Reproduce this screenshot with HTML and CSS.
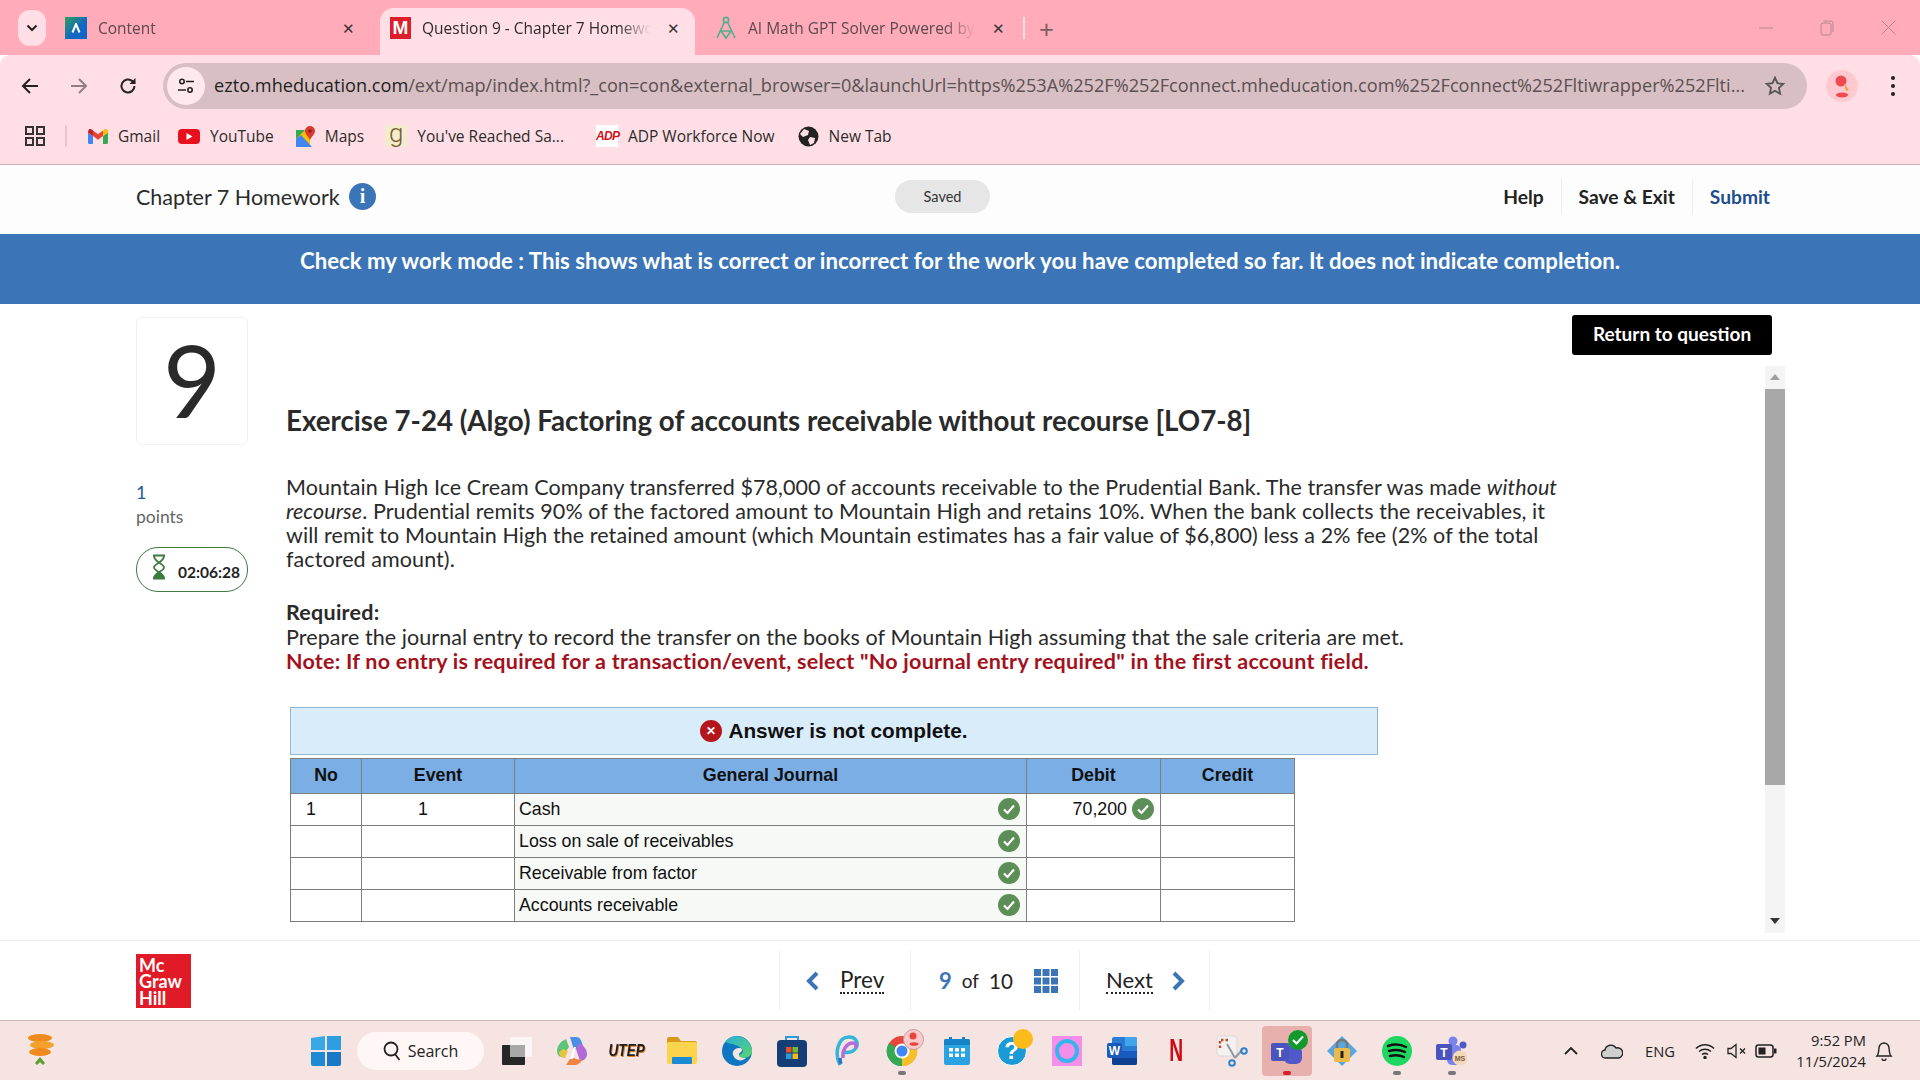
FILE: index.html
```html
<!DOCTYPE html>
<html lang="en">
<head>
    <meta charset="UTF-8">
    <title>Question 9 - Chapter 7 Homework</title>
    <link rel="stylesheet" href="styles.css">
</head>
<body>
    <svg class="defs" width="0" height="0">
        <symbol id="ok" viewBox="0 0 22 22">
            <circle cx="11" cy="11" r="11" fill="#5b8f57"/>
            <path d="M6 11.5l3.5 3.500L16 7.500" fill="none" stroke="#fff" stroke-width="2.200"/>
        </symbol>
    </svg>

    <!-- Browser tabs -->
    <div class="tabstrip">
        <div class="tab-menu">
            <svg width="12" height="8" viewBox="0 0 12 8"><path d="M1.500 1.500L6 6l4.500-4.500" fill="none" stroke="#222" stroke-width="2"/></svg>
        </div>
        <div class="tab">
            <span class="fav fav-content">
                <svg width="10" height="10" viewBox="0 0 10 10"><path d="M1.500 9.500L5 1l3.500 8.500" fill="none" stroke="#fff" stroke-width="2"/></svg>
            </span>
            <span class="tab-title">Content</span>
            <span class="tab-x">✕</span>
        </div>
        <div class="tab active">
            <span class="fav fav-m">M</span>
            <span class="tab-title">Question 9 - Chapter 7 Homework</span>
            <span class="tab-x">✕</span>
        </div>
        <div class="tab">
            <svg class="fav" width="22" height="24" viewBox="0 0 22 24" fill="none" stroke="#4fb08f" stroke-width="1.600">
                <circle cx="11" cy="4" r="2.600"/>
                <path d="M9.500 6L2 22M12.500 6L20 22M5 15h12M6 15l5 7 5-7"/>
            </svg>
            <span class="tab-title">AI Math GPT Solver Powered by ChatGPT</span>
            <span class="tab-x">✕</span>
        </div>
        <span class="tab-sep"></span>
        <span class="tab-plus">+</span>
        <div class="win-controls">
            <svg width="14" height="14" viewBox="0 0 14 14"><path d="M0 7h14" stroke="#b08a92" stroke-width="1"/></svg>
            <svg width="14" height="16" viewBox="0 0 14 16" fill="none" stroke="#b08a92" stroke-width="1"><rect x="1" y="3" width="10" height="12" rx="2"/><path d="M3.500 1H11a2 2 0 0 1 2 2v9"/></svg>
            <svg width="15" height="15" viewBox="0 0 15 15"><path d="M0.500 0.500l14 14M14.500 0.500l-14 14" stroke="#b08a92" stroke-width="1"/></svg>
        </div>
    </div>

    <!-- Address bar -->
    <div class="toolbar">
        <svg class="nav-ic" width="20" height="20" viewBox="0 0 20 20" fill="none" stroke="#222" stroke-width="2"><path d="M18 10H3M10 3l-7 7 7 7"/></svg>
        <svg class="nav-ic" width="20" height="20" viewBox="0 0 20 20" fill="none" stroke="#8d7f82" stroke-width="2"><path d="M2 10h15M10 3l7 7-7 7"/></svg>
        <svg class="nav-ic" width="20" height="20" viewBox="0 0 20 20" fill="none" stroke="#222" stroke-width="2"><path d="M16.500 10a6.500 6.500 0 1 1-2-4.700L17 7.500"/><path d="M17.500 2v6h-6" fill="#222" stroke="none"/></svg>
        <div class="omnibox">
            <span class="site-btn">
                <svg width="18" height="18" viewBox="0 0 18 18" fill="none" stroke="#222" stroke-width="1.600"><circle cx="5" cy="4.500" r="2.200"/><path d="M9 4.500h8M1 13h8"/><circle cx="13" cy="13" r="2.200"/></svg>
            </span>
            <span class="url"><span class="url-host">ezto.mheducation.com</span>/ext/map/index.html?_con=con&amp;external_browser=0&amp;launchUrl=https%253A%252F%252Fconnect.mheducation.com%252Fconnect%252Fltiwrapper%252Flti...</span>
            <svg width="22" height="22" viewBox="0 0 24 24" fill="none" stroke="#555" stroke-width="2"><path d="M12 3l2.700 6 6.300.700-4.700 4.300 1.300 6.500L12 17.200 6.400 20.500l1.300-6.500L3 9.700 9.300 9z"/></svg>
        </div>
        <span class="avatar">
            <svg width="20" height="26" viewBox="0 0 20 26"><circle cx="9" cy="8" r="5.500" fill="#f04a50"/><path d="M12 10l5 7-3 1z" fill="#f2a33c"/><ellipse cx="10" cy="22" rx="6" ry="2.500" fill="#f04a50"/></svg>
        </span>
        <svg class="menu-dots" width="6" height="22" viewBox="0 0 6 22" fill="#222"><circle cx="3" cy="3" r="2"/><circle cx="3" cy="11" r="2"/><circle cx="3" cy="19" r="2"/></svg>
    </div>

    <!-- Bookmarks -->
    <div class="bookmarks">
        <svg class="apps" width="20" height="20" viewBox="0 0 20 20" fill="none" stroke="#333" stroke-width="2"><rect x="1" y="1" width="7" height="7"/><rect x="12" y="1" width="7" height="7"/><rect x="1" y="12" width="7" height="7"/><rect x="12" y="12" width="7" height="7"/></svg>
        <span class="bm-sep"></span>
        <span class="bm bm-gmail">
            <svg width="20" height="15" viewBox="0 0 20 15">
                <path d="M0 3.500v10A1.500 1.500 0 0 0 1.500 15H5V7z" fill="#4285f4"/>
                <path d="M20 3.500v10a1.500 1.500 0 0 1-1.500 1.500H15V7z" fill="#34a853"/>
                <path d="M5 7V1.500l5 3.800 5-3.800V7l-5 3.800z" fill="#ea4335"/>
                <path d="M0 3.500L5 7V1.500L3 0C1.500-.8 0 .8 0 3.500z" fill="#c5221f"/>
                <path d="M15 1.500V7l5-3.500c0-2.700-1.500-4.300-3-3.500z" fill="#fbbc04"/>
            </svg>
            Gmail
        </span>
        <span class="bm bm-yt">
            <svg width="22" height="15" viewBox="0 0 22 15"><rect width="22" height="15" rx="4" fill="#e8101c"/><path d="M8.500 4v7l6-3.500z" fill="#fff"/></svg>
            YouTube
        </span>
        <span class="bm bm-maps">
            <svg width="19" height="21" viewBox="0 0 19 21">
                <path d="M0 4h14v17H0z" fill="#fbbc04"/>
                <path d="M0 4h9L0 13z" fill="#34a853"/>
                <path d="M0 21V13l5-4 11 12z" fill="#4285f4"/>
                <path d="M14 0a5 5 0 0 1 5 5c0 3-3 5-5 9-2-4-5-6-5-9a5 5 0 0 1 5-5z" fill="#d93a30"/>
                <circle cx="14" cy="5" r="1.800" fill="#8f1f1a"/>
            </svg>
            Maps
        </span>
        <span class="bm bm-g"><span class="g-fav">g</span>You've Reached Sa...</span>
        <span class="bm bm-adp"><span class="adp-fav">ADP</span>ADP Workforce Now</span>
        <span class="bm bm-new">
            <svg width="21" height="21" viewBox="0 0 21 21"><circle cx="10.500" cy="10.500" r="10" fill="#222"/><path d="M6 3l5 2-1 4-5 2-3-3zM12 11l5 1-1 5-4 2-2-5z" fill="#ffdfe5"/></svg>
            New Tab
        </span>
    </div>

    <!-- Assignment header -->
    <div class="app-header">
        <div class="assign-title">Chapter 7 Homework</div>
        <span class="info-ic">i</span>
        <span class="saved">Saved</span>
        <div class="header-links">
            <a href="#">Help</a>
            <a href="#">Save &amp; Exit</a>
            <a href="#" class="submit">Submit</a>
        </div>
    </div>

    <div class="banner">Check my work mode : This shows what is correct or incorrect for the work you have completed so far. It does not indicate completion.</div>

    <!-- Question -->
    <div class="content">
        <div class="side">
            <div class="q-number">9</div>
            <div class="points-num">1</div>
            <div class="points-label">points</div>
            <div class="timer">
                <svg class="hourglass" width="18" height="26" viewBox="0 0 18 26" fill="none" stroke="#3d7a40" stroke-width="1.800"><path d="M3 1.500h12M3 24.500h12M4 2c0 6 10 8 10 11.500S4 19 4 24M14 2c0 6-10 8-10 11.500S14 19 14 24"/><path d="M4 24c0-3 3-5 5-6 2 1 5 3 5 6z" fill="#3d7a40" stroke="none"/></svg>
                <span>02:06:28</span>
            </div>
        </div>

        <div class="main">
            <div class="return-row"><button class="return-btn">Return to question</button></div>
            <div class="scroll-wrap">
                <div class="question">
                    <h1>Exercise 7-24 (Algo) Factoring of accounts receivable without recourse [LO7-8]</h1>
                    <p class="q-text">Mountain High Ice Cream Company transferred $78,000 of accounts receivable to the Prudential Bank. The transfer was made <em>without recourse</em>. Prudential remits 90% of the factored amount to Mountain High and retains 10%. When the bank collects the receivables, it will remit to Mountain High the retained amount (which Mountain estimates has a fair value of $6,800) less a 2% fee (2% of the total factored amount).</p>
                    <p class="q-req"><strong>Required:</strong><br>Prepare the journal entry to record the transfer on the books of Mountain High assuming that the sale criteria are met.<br><strong class="note">Note: If no entry is required for a transaction/event, select "No journal entry required" in the first account field.</strong></p>

                    <div class="alert">
                        <span class="alert-x">✕</span>
                        Answer is not complete.
                    </div>
                    <table class="journal">
                        <thead>
                            <tr><th class="c-no">No</th><th class="c-ev">Event</th><th class="c-gj">General Journal</th><th class="c-dr">Debit</th><th class="c-cr">Credit</th></tr>
                        </thead>
                        <tbody>
                            <tr>
                                <td class="no">1</td><td class="ev">1</td>
                                <td class="acct"><div class="acct-in">Cash<svg class="ok"><use href="#ok"/></svg></div></td>
                                <td class="dr"><div class="dr-in">70,200<svg class="ok"><use href="#ok"/></svg></div></td><td></td>
                            </tr>
                            <tr>
                                <td></td><td></td>
                                <td class="acct"><div class="acct-in">Loss on sale of receivables<svg class="ok"><use href="#ok"/></svg></div></td>
                                <td></td><td></td>
                            </tr>
                            <tr>
                                <td></td><td></td>
                                <td class="acct"><div class="acct-in">Receivable from factor<svg class="ok"><use href="#ok"/></svg></div></td>
                                <td></td><td></td>
                            </tr>
                            <tr>
                                <td></td><td></td>
                                <td class="acct"><div class="acct-in">Accounts receivable<svg class="ok"><use href="#ok"/></svg></div></td>
                                <td></td><td></td>
                            </tr>
                        </tbody>
                    </table>
                </div>
                <div class="scrollbar">
                    <span class="sb-up"></span>
                    <span class="sb-thumb"></span>
                    <span class="sb-down"></span>
                </div>
            </div>
        </div>
    </div>

    <!-- Footer nav -->
    <div class="app-footer">
        <div class="mh-logo">Mc<br>Graw<br>Hill</div>
        <div class="pager">
            <div class="pg pg-prev">
                <svg width="14" height="20" viewBox="0 0 14 20"><path d="M11 2L3 10l8 8" fill="none" stroke="#3b75b7" stroke-width="4"/></svg>
                <a href="#">Prev</a>
            </div>
            <div class="pg pg-count">
                <b>9</b><span class="of">of</span><span>10</span>
                <svg class="grid-ic" width="24" height="24" viewBox="0 0 24 24" fill="#3b75b7"><rect width="7" height="7"/><rect x="8.500" width="7" height="7"/><rect x="17" width="7" height="7"/><rect y="8.500" width="7" height="7"/><rect x="8.500" y="8.500" width="7" height="7"/><rect x="17" y="8.500" width="7" height="7"/><rect y="17" width="7" height="7"/><rect x="8.500" y="17" width="7" height="7"/><rect x="17" y="17" width="7" height="7"/></svg>
            </div>
            <div class="pg pg-next">
                <a href="#">Next</a>
                <svg width="14" height="20" viewBox="0 0 14 20"><path d="M3 2l8 8-8 8" fill="none" stroke="#3b75b7" stroke-width="4"/></svg>
            </div>
        </div>
    </div>

    <!-- Windows taskbar -->
    <div class="taskbar">
        <svg class="tray-left" width="30" height="36" viewBox="0 0 30 36">
            <ellipse cx="15" cy="5" rx="12" ry="4" fill="#ef8a1d"/><ellipse cx="17" cy="12" rx="12" ry="4" fill="#f2a12d"/><ellipse cx="15" cy="19" rx="11" ry="4" fill="#ef8a1d"/>
            <path d="M10 30l5-6 5 6-2 2-3-3-3 3z" fill="#5a9e2f"/>
        </svg>
        <div class="task-icons">
            <span class="ti">
                <svg width="30" height="30" viewBox="0 0 30 30"><path d="M0 2l14-2v14H0z" fill="#38a9e6"/><path d="M16 0l14 0v14H16z" fill="#2f9ee0"/><path d="M0 16h14v14H2a2 2 0 0 1-2-2z" fill="#1f8ad4"/><path d="M16 16h14v12a2 2 0 0 1-2 2H16z" fill="#1878c4"/></svg>
            </span>
            <div class="search-pill">
                <svg width="18" height="20" viewBox="0 0 18 20" fill="none" stroke="#222" stroke-width="1.800"><circle cx="8" cy="8" r="6.500"/><path d="M12 13l4.500 6"/></svg>
                Search
            </div>
            <span class="ti">
                <svg width="30" height="28" viewBox="0 0 30 28"><rect x="8" y="0" width="22" height="20" rx="1" fill="#f9f6f5"/><rect x="0" y="8" width="23" height="20" rx="1" fill="#262626"/><rect x="8" y="8" width="15" height="12" fill="#a8a8a8"/></svg>
            </span>
            <span class="ti">
                <svg width="30" height="30" viewBox="0 0 30 30">
                    <path d="M13 1h6c4 0 5 3 6 6l3 9c-3-3-7-4-11-2z" fill="#4a8fe7"/>
                    <path d="M22 7c4 2 8 6 8 11 0 4-3 7-7 7l-4-12z" fill="#b06bd8"/>
                    <path d="M9 3c-5 2-9 7-9 12 0 3 2 6 5 6l7-10z" fill="#5cc47a"/>
                    <path d="M2 16c0 4 3 6 6 6l3-7-5-2z" fill="#e3c540"/>
                    <path d="M9 29h8c4 0 7-2 8-6-4 1-8 0-10-3z" fill="#ef8245"/>
                    <path d="M13 23l4-12h2l-3 12z" fill="#fff"/>
                </svg>
            </span>
            <span class="ti ti-utep"><span>UTEP</span></span>
            <span class="ti">
                <svg width="30" height="27" viewBox="0 0 30 27"><path d="M0 2a2 2 0 0 1 2-2h9l3 4h14a2 2 0 0 1 2 2v4H0z" fill="#d99a1c"/><rect y="5" width="30" height="22" rx="2" fill="#fcd34d"/><rect x="5" y="20" width="20" height="7" rx="1" fill="#1c8ad4"/></svg>
            </span>
            <span class="ti">
                <svg width="30" height="30" viewBox="0 0 30 30">
                    <defs><linearGradient id="edge" x1="0" y1="0" x2="1" y2="1"><stop offset="0" stop-color="#2ab0d8"/><stop offset="1" stop-color="#5ad66a"/></linearGradient></defs>
                    <circle cx="15" cy="15" r="15" fill="#0f76c2"/>
                    <path d="M3 6C9-2 25-3 30 13c1 6-4 9-9 9-3 0-5-1-5-3 4 0 6-3 4-6-3-4-11-5-17-7z" fill="url(#edge)"/>
                    <path d="M11 19c-1-4 2-7 6-7 3 0 4 2 2 4-2 1-3 3-1 5 2 1 4 1 6 1-4 4-11 3-13-3z" fill="#f6e4e2"/>
                </svg>
            </span>
            <span class="ti">
                <svg width="30" height="32" viewBox="0 0 30 32"><path d="M9 7V2h12v5" fill="none" stroke="#2b9bdc" stroke-width="2"/><rect y="5" width="30" height="27" rx="4" fill="#153e77"/><rect x="9" y="12" width="5.500" height="5.500" fill="#e8502a"/><rect x="15.500" y="12" width="5.500" height="5.500" fill="#7ab92b"/><rect x="9" y="18.500" width="5.500" height="5.500" fill="#2b9bdc"/><rect x="15.500" y="18.500" width="5.500" height="5.500" fill="#f6b51c"/></svg>
            </span>
            <span class="ti">
                <svg width="26" height="32" viewBox="0 0 26 32" fill="none" stroke-width="3.500"><path d="M6 30C0 18 4 2 15 2c7 0 10 6 7 11-3 4-8 5-12 4" stroke="#35b6d8"/><path d="M9 23c-1-7 3-15 10-15 3 0 4 3 2 5" stroke="#b56bd8"/><path d="M7 29c-1-2-1-4-1-6" stroke="#2c72c9"/></svg>
            </span>
            <span class="ti">
                <svg width="32" height="32" viewBox="0 0 32 32"><circle cx="16" cy="16" r="15" fill="#e8453c"/><path d="M16 16L29 8A15 15 0 0 1 16 31z" fill="#f5c02a"/><path d="M16 16l-13-8a15 15 0 0 0 13 23z" fill="#34a853"/><circle cx="16" cy="16" r="7.500" fill="#fff"/><circle cx="16" cy="16" r="5.500" fill="#4285f4"/></svg>
                <span class="chrome-badge">
                    <svg width="14" height="16" viewBox="0 0 14 16"><circle cx="6" cy="5" r="3.500" fill="#e8453c"/><ellipse cx="7" cy="13" rx="4.500" ry="1.800" fill="#e8453c"/></svg>
                </span>
                <span class="run-dot"></span>
            </span>
            <span class="ti">
                <svg width="26" height="28" viewBox="0 0 26 28"><rect y="2" width="26" height="26" rx="2" fill="#2ba3e0"/><path d="M0 4a2 2 0 0 1 2-2h22a2 2 0 0 1 2 2v4H0z" fill="#1583c6"/><rect width="3" height="5" x="5" fill="#1583c6"/><rect width="3" height="5" x="18" fill="#1583c6"/><g fill="#fff"><rect x="5" y="11" width="4" height="3.500"/><rect x="11" y="11" width="4" height="3.500"/><rect x="17" y="11" width="4" height="3.500"/><rect x="5" y="16.500" width="4" height="3.500"/><rect x="11" y="16.500" width="4" height="3.500"/><rect x="17" y="16.500" width="4" height="3.500"/></g></svg>
            </span>
            <span class="ti ti-help">
                <span class="help-q">?</span>
                <span class="help-dot"></span>
            </span>
            <span class="ti">
                <svg width="30" height="30" viewBox="0 0 30 30"><rect width="30" height="30" fill="#f58ee8"/><circle cx="15" cy="15" r="10" fill="none" stroke="#35b5ec" stroke-width="4"/></svg>
            </span>
            <span class="ti">
                <svg width="30" height="28" viewBox="0 0 30 28"><rect x="5" width="25" height="28" rx="2" fill="#2b7cd3"/><path d="M18 0h10a2 2 0 0 1 2 2v7H18z" fill="#41a5ee"/><rect x="5" y="14" width="25" height="7" fill="#185abd"/><path d="M5 21h25v5a2 2 0 0 1-2 2H7a2 2 0 0 1-2-2z" fill="#103f91"/><rect x="0" y="6" width="15" height="15" rx="2" fill="#185abd"/><text x="7.500" y="18" text-anchor="middle" class="word-w">W</text></svg>
            </span>
            <span class="ti ti-netflix"><span>N</span></span>
            <span class="ti">
                <svg width="32" height="32" viewBox="0 0 32 32" fill="none"><rect x="1" y="1" width="20" height="20" rx="3" fill="#f5f1f1" stroke="#dfd8d8"/><path d="M4 13V5h8" stroke="#c0492b" stroke-width="2.500" stroke-dasharray="2.500 2"/><path d="M11 9l8 14M26 15l-7 8" stroke="#8f9aa5" stroke-width="2"/><circle cx="16" cy="28" r="2.800" stroke="#2b82c9" stroke-width="2"/><circle cx="28" cy="16" r="2.800" stroke="#2b82c9" stroke-width="2"/></svg>
            </span>
            <span class="ti ti-active">
                <svg width="32" height="30" viewBox="0 0 32 30"><circle cx="22" cy="11" r="6" fill="#7b83eb"/><rect x="13" y="10" width="18" height="18" rx="6" fill="#5059c9"/><rect x="0" y="7" width="18" height="18" rx="2" fill="#4b53bc"/><text x="9" y="21" text-anchor="middle" class="teams-t">T</text></svg>
                <span class="teams-check">
                    <svg width="12" height="10" viewBox="0 0 12 10"><path d="M1 5l3.500 3.500L11 1.500" fill="none" stroke="#fff" stroke-width="2"/></svg>
                </span>
                <span class="run-dot red"></span>
            </span>
            <span class="ti">
                <svg width="30" height="30" viewBox="0 0 30 30"><path d="M15 0l15 15-15 15L0 15z" fill="#5aa7dd"/><rect x="7" y="12" width="16" height="14" rx="2" fill="#e9b949"/><path d="M10 12V9a5 5 0 0 1 10 0v3" fill="none" stroke="#777" stroke-width="2.500"/><rect x="13.500" y="15" width="3" height="7" fill="#222"/></svg>
            </span>
            <span class="ti">
                <svg width="30" height="30" viewBox="0 0 30 30" fill="none"><circle cx="15" cy="15" r="15" fill="#1ed760"/><path d="M6 10c6-2 12-2 18 1M7 15c5-1.500 11-1.500 16 1M8 20c4-1 10-1 14 1" stroke="#111" stroke-width="2.500" stroke-linecap="round"/></svg>
                <span class="run-dot"></span>
            </span>
            <span class="ti">
                <svg width="32" height="30" viewBox="0 0 32 30"><circle cx="17" cy="5" r="4.500" fill="#7b83eb"/><circle cx="27" cy="9" r="3.500" fill="#5059c9"/><rect x="11" y="9" width="14" height="20" rx="5" fill="#7b83eb"/><rect x="0" y="8" width="16" height="16" rx="2" fill="#4b53bc"/><text x="8" y="20.500" text-anchor="middle" class="teams-t">T</text><circle cx="24" cy="22" r="7.500" fill="#f3d9b8"/><text x="24" y="24.500" text-anchor="middle" class="teams-ms">MS</text></svg>
                <span class="run-dot"></span>
            </span>
        </div>
        <div class="tray">
            <svg class="tray-caret" width="14" height="9" viewBox="0 0 14 9"><path d="M1 8l6-6 6 6" fill="none" stroke="#222" stroke-width="1.800"/></svg>
            <svg class="tray-cloud" width="22" height="16" viewBox="0 0 22 16"><path d="M5 15a4 4 0 0 1-1-8 6 6 0 0 1 11-2 5 5 0 0 1 3 10z" fill="#cfcfcf" stroke="#222" stroke-width="1.400"/></svg>
            <span class="tray-lang">ENG</span>
            <svg class="tray-wifi" width="20" height="16" viewBox="0 0 20 16" fill="none" stroke="#222" stroke-width="1.500"><path d="M1 5.500c5-5 13-5 18 0M4 8.500c3.500-3 8.500-3 12 0M7 11.500c2-1.500 4-1.500 6 0"/><circle cx="10" cy="14.500" r="1" fill="#222"/></svg>
            <svg class="tray-vol" width="20" height="16" viewBox="0 0 20 16" fill="none" stroke="#222" stroke-width="1.300"><path d="M1 5.500h3L9 1.500v13l-5-4H1z"/><path d="M13 5.500l5 5M18 5.500l-5 5"/></svg>
            <svg class="tray-bat" width="22" height="14" viewBox="0 0 22 14"><rect x="1" y="1" width="17" height="12" rx="2.500" fill="none" stroke="#222" stroke-width="1.500"/><rect x="3.500" y="3.500" width="7" height="7" fill="#222"/><rect x="19" y="4.500" width="2.500" height="5" fill="#222"/></svg>
            <div class="clock"><div>9:52 PM</div><div>11/5/2024</div></div>
            <svg class="tray-bell" width="18" height="20" viewBox="0 0 18 20" fill="none" stroke="#222" stroke-width="1.400"><path d="M2 15c2-2 1.500-5 2-8a5 5 0 0 1 10 0c.500 3 0 6 2 8zM7 17.500a2 2 0 0 0 4 0"/></svg>
        </div>
    </div>
</body>
</html>
```

FILE: styles.css
```css
/* General Reset */
* {
    margin: 0;
    padding: 0;
    box-sizing: border-box;
}

body {
    width: 1920px;
    height: 1080px;
    overflow: hidden;
    display: flex;
    flex-direction: column;
    background: #fff;
    color: #222;
    font-family: "Lato", "Liberation Sans", sans-serif;
}

a {
    color: inherit;
    text-decoration: none;
}

.defs {
    position: absolute;
}

/* Browser tabs */
.tabstrip {
    height: 55px;
    flex: none;
    display: flex;
    align-items: flex-end;
    background: #ffabb9;
    font-family: "Open Sans", "Noto Sans", sans-serif;
    font-size: 15.500px;
    color: #5b4a4e;
    padding-left: 18px;
}

.tab-menu {
    width: 28px;
    height: 36px;
    margin-bottom: 9px;
    margin-right: 9px;
    border-radius: 12px;
    background: #ffdfe5;
    display: flex;
    align-items: center;
    justify-content: center;
}

.tab {
    width: 315px;
    height: 47px;
    padding: 0 15px 8px 10px;
    display: flex;
    align-items: center;
    gap: 11px;
}

.tab + .tab {
    margin-left: 10px;
}

.tab.active {
    background: #ffdfe5;
    border-radius: 14px 14px 0 0;
    color: #2c2c2c;
}

.tab-title {
    flex: 1;
    white-space: nowrap;
    overflow: hidden;
    -webkit-mask-image: linear-gradient(to right, #000 86%, transparent);
    mask-image: linear-gradient(to right, #000 86%, transparent);
}

.tab:first-of-type .tab-title {
    -webkit-mask-image: none;
    mask-image: none;
}

.tab-x {
    font-size: 15px;
    margin-left: 5px;
    color: #333;
}

.fav {
    flex: none;
}

.fav-content {
    width: 22px;
    height: 22px;
    background: linear-gradient(135deg, #2c9f5c 0%, #1266c4 60%, #1266c4 100%);
    display: flex;
    align-items: center;
    justify-content: center;
}

.fav-m {
    width: 21px;
    height: 22px;
    background: #dc1f2b;
    color: #fff;
    font: bold 19px/22px "Liberation Sans", sans-serif;
    text-align: center;
}

.tab-sep {
    width: 2px;
    height: 22px;
    background: #ffdfe5;
    margin: 0 0 16px 3px;
}

.tab-plus {
    font-size: 26px;
    line-height: 30px;
    margin: 0 0 11px 14px;
    color: #7d5a62;
}

.win-controls {
    margin-left: auto;
    height: 55px;
    display: flex;
    align-items: center;
    gap: 47px;
    padding-right: 24px;
}

/* Address bar */
.toolbar {
    height: 55px;
    flex: none;
    display: flex;
    align-items: center;
    background: #ffdfe5;
    padding: 7px 0 0 20px;
    border-radius: 10px 10px 0 0;
    font-family: "Open Sans", "Noto Sans", sans-serif;
}

.nav-ic {
    margin-right: 29px;
}

.omnibox {
    width: 1644px;
    height: 46px;
    margin-left: -4px;
    background: #d8bfc3;
    border-radius: 23px;
    display: flex;
    align-items: center;
    padding: 0 21px 0 4px;
}

.site-btn {
    width: 38px;
    height: 38px;
    border-radius: 50%;
    background: #ffe9ec;
    display: flex;
    align-items: center;
    justify-content: center;
    margin-right: 9px;
}

.url {
    flex: 1;
    font-size: 18.150px;
    line-height: 24px;
    padding-bottom: 2px;
    color: #5b5052;
    white-space: nowrap;
    overflow: hidden;
}

.url-host {
    color: #1f1f1f;
}

.avatar {
    width: 32px;
    height: 32px;
    margin-left: 19px;
    border-radius: 50%;
    background: #ffc9cf;
    display: flex;
    align-items: center;
    justify-content: center;
}

.menu-dots {
    margin-left: 32px;
}

/* Bookmarks */
.bookmarks {
    height: 55px;
    flex: none;
    display: flex;
    align-items: center;
    background: #ffdfe5;
    border-bottom: 1px solid #c9b3b7;
    padding: 0 0 2px 25px;
    font-family: "Open Sans", "Noto Sans", sans-serif;
    font-size: 15.500px;
    color: #2c2c2c;
}

.bm-sep {
    width: 2px;
    height: 22px;
    background: #f0c2ca;
    margin: 0 21px 0 20px;
}

.bm {
    display: flex;
    align-items: center;
    gap: 10px;
    white-space: nowrap;
}

.bm-yt {
    margin-left: 18px;
}

.bm-maps {
    margin-left: 22px;
}

.bm-g {
    margin-left: 21px;
}

.g-fav {
    width: 22px;
    height: 22px;
    background: #f4eccf;
    color: #7a5a2a;
    font: 300 26px/17px "Roboto", sans-serif;
    text-align: center;
}

.bm-adp {
    margin-left: 32px;
}

.adp-fav {
    width: 22px;
    height: 22px;
    background: #fff;
    color: #d0121b;
    font: italic bold 12px/22px "Liberation Sans", sans-serif;
    letter-spacing: -.6px;
    text-align: center;
}

.bm-new {
    margin-left: 23px;
}

/* Assignment header */
.app-header {
    height: 69px;
    flex: none;
    display: flex;
    align-items: center;
    padding: 0 133px 6px 136px;
    background: #fdfdfd;
}

.assign-title {
    font-size: 21.500px;
    color: #2b2b2b;
    width: 213px;
    white-space: nowrap;
}

.info-ic {
    width: 27px;
    height: 27px;
    border-radius: 50%;
    background: #3b75b7;
    color: #fff;
    font: bold 20px/27px "Liberation Serif", serif;
    text-align: center;
}

.saved {
    width: 95px;
    height: 33px;
    margin-left: 519px;
    border-radius: 17px;
    background: #e6e6e6;
    color: #333;
    font-size: 14.500px;
    line-height: 33px;
    text-align: center;
}

.header-links {
    margin-left: auto;
    display: flex;
    font-size: 19.200px;
    font-weight: 700;
    color: #222;
}

.header-links a {
    padding: 6px 17px;
    border-left: 1px solid #eee;
}

.header-links a:first-child {
    border-left: none;
}

.header-links .submit {
    color: #1f4e8c;
}

.banner {
    height: 70px;
    flex: none;
    background: #3b75b7;
    color: #fff;
    font-size: 22.200px;
    font-weight: 700;
    text-align: center;
    padding-top: 13px;
}

/* Question */
.content {
    height: 636px;
    flex: none;
    display: flex;
    padding-left: 136px;
    overflow: hidden;
}

.side {
    width: 112px;
    flex: none;
    padding-top: 13px;
}

.q-number {
    height: 128px;
    border: 1px solid #f0f0f0;
    border-radius: 6px;
    text-align: center;
    font-size: 100px;
    line-height: 122px;
    color: #2a2a2a;
}

.points-num {
    margin-top: 35px;
    font-size: 18px;
    line-height: 24px;
    color: #1f5a99;
}

.points-label {
    font-size: 17.500px;
    line-height: 25px;
    color: #666;
}

.timer {
    height: 45px;
    margin-top: 18px;
    border: 1px solid #3d7a40;
    border-radius: 22px;
    display: flex;
    align-items: center;
    padding-left: 13px;
    gap: 10px;
    font-size: 15.500px;
    font-weight: 700;
    color: #222;
}

.timer span {
    padding-top: 5px;
}

.hourglass {
    margin-bottom: 5px;
}

.main {
    width: 1499px;
    flex: none;
    margin-left: 38px;
}

.return-row {
    height: 62px;
    display: flex;
    justify-content: flex-end;
    padding: 11px 13px 0 0;
}

.return-btn {
    width: 200px;
    height: 40px;
    padding-bottom: 3px;
    background: #000;
    color: #fff;
    border: none;
    border-radius: 3px;
    font-family: inherit;
    font-size: 19px;
    font-weight: 700;
}

.scroll-wrap {
    height: 574px;
    display: flex;
    justify-content: space-between;
}

.question {
    width: 1290px;
}

h1 {
    font-size: 27.700px;
    line-height: 32px;
    font-weight: 700;
    color: #2a2a2a;
    padding-top: 39px;
    white-space: nowrap;
}

.q-text {
    margin-top: 38px;
    font-size: 21.500px;
    letter-spacing: .08px;
    line-height: 24px;
    color: #2a2a2a;
}

.q-req {
    margin-top: 29px;
    font-size: 21.500px;
    letter-spacing: .07px;
    line-height: 24.500px;
    color: #2a2a2a;
}

.q-req strong {
    letter-spacing: .25px;
}

.note {
    color: #a3121c;
}

.alert {
    width: 1088px;
    height: 48px;
    margin: 33px 0 3px 4px;
    background: #d9ecfa;
    border: 1px solid #90b7d4;
    display: flex;
    align-items: center;
    justify-content: center;
    gap: 6px;
    font: bold 20.800px "Liberation Sans", sans-serif;
    color: #111;
}

.alert-x {
    width: 22px;
    height: 22px;
    border-radius: 50%;
    background: #b5161c;
    color: #fff;
    font-size: 12px;
    line-height: 22px;
    text-align: center;
}

.journal {
    width: 1005px;
    margin-left: 4px;
    border-collapse: collapse;
    table-layout: fixed;
    font: 17.800px "Liberation Sans", sans-serif;
    color: #111;
}

.journal th,
.journal td {
    border: 1px solid #7d7d7d;
    height: 32px;
}

.journal th {
    height: 35px;
    background: #7aaee5;
    font-weight: 700;
}

.journal td {
    padding: 0 6px 0 4px;
}

.c-no { width: 71px; }
.c-ev { width: 153px; }
.c-gj { width: 512px; }
.c-dr { width: 134px; }
.c-cr { width: 134px; }

.journal .no {
    padding-left: 15px;
}

.journal .ev {
    padding-left: 56px;
}

.journal .acct {
    background: #f6f9f5;
}

.acct-in,
.dr-in {
    display: flex;
    align-items: center;
    justify-content: space-between;
}

.dr-in {
    justify-content: flex-end;
    gap: 5px;
}

.ok {
    width: 22px;
    height: 22px;
    flex: none;
}

.scrollbar {
    width: 20px;
    height: 567px;
    background: #f4f4f4;
    display: flex;
    flex-direction: column;
    align-items: center;
}

.sb-up,
.sb-down {
    width: 0;
    height: 0;
    border-left: 5px solid transparent;
    border-right: 5px solid transparent;
}

.sb-up {
    border-bottom: 6px solid #a0a0a0;
    margin: 8px 0 9px;
}

.sb-thumb {
    width: 100%;
    height: 396px;
    background: #a8a8a8;
}

.sb-down {
    border-top: 6px solid #333;
    margin-top: auto;
    margin-bottom: 9px;
}

/* Footer nav */
.app-footer {
    height: 80px;
    flex: none;
    border-top: 1px solid #ececec;
    display: flex;
    align-items: center;
    padding-left: 136px;
}

.mh-logo {
    width: 55px;
    height: 54px;
    background: #e01a26;
    color: #fff;
    font: bold 18px/16.500px "Lato", sans-serif;
    padding: 3px 0 0 3px;
}

.pager {
    margin-left: 588px;
    height: 61px;
    display: flex;
    font-size: 22.500px;
}

.pg {
    height: 61px;
    display: flex;
    align-items: center;
    border-left: 1px solid #f0f0f0;
}

.pg a {
    border-bottom: 2px dotted #222;
    line-height: 24px;
}

.pg-prev {
    width: 131px;
    padding-left: 26px;
    gap: 20px;
}

.pg-count {
    width: 169px;
    padding-left: 28px;
    font-size: 20.500px;
}

.pg-count b {
    font-size: 22px;
    color: #3b75b7;
}

.of {
    font-size: 19px;
    margin: 0 10px;
}

.grid-ic {
    margin-left: 21px;
}

.pg-next {
    width: 131px;
    padding-left: 26px;
    gap: 18px;
    font-size: 22px;
    border-right: 1px solid #f0f0f0;
}

/* Windows taskbar */
.taskbar {
    height: 60px;
    flex: none;
    display: flex;
    align-items: center;
    background: #f6e4e2;
    border-top: 1px solid #cdb9b9;
    padding-left: 25px;
}

.tray-left {
    flex: none;
}

.task-icons {
    display: flex;
    align-items: center;
    margin-left: 243px;
    height: 50px;
}

.ti {
    width: 55px;
    height: 50px;
    flex: none;
    position: relative;
    display: flex;
    align-items: center;
    justify-content: center;
}

.search-pill {
    width: 127px;
    height: 38px;
    margin: 0 5px 0 4px;
    border-radius: 19px;
    background: #fef7f5;
    display: flex;
    align-items: center;
    justify-content: center;
    gap: 7px;
    font: 16px "Open Sans", sans-serif;
    color: #222;
}

.ti-utep span {
    display: inline-block;
    font: italic bold 17px "Liberation Sans", sans-serif;
    transform: scaleX(.8);
    color: #1f1f1f;
    text-shadow: 1px 1px 0 #d9822b;
}

.chrome-badge {
    position: absolute;
    top: 3px;
    right: 5px;
    width: 21px;
    height: 21px;
    border-radius: 50%;
    background: #ffc9cc;
    border: 1px solid #b9a0a0;
    display: flex;
    align-items: center;
    justify-content: center;
}

.run-dot {
    position: absolute;
    left: 50%;
    bottom: 1px;
    width: 8px;
    height: 4px;
    margin-left: -4px;
    border-radius: 2px;
    background: #777;
}

.run-dot.red {
    background: #d4202a;
}

.help-q {
    width: 30px;
    height: 30px;
    border-radius: 50%;
    background: #1b9ad6;
    border: 1px solid #fff;
    color: #fff;
    font: bold 24px/28px "Liberation Sans", sans-serif;
    text-align: center;
}

.help-dot {
    position: absolute;
    top: 3px;
    right: 6px;
    width: 20px;
    height: 20px;
    border-radius: 50%;
    background: #fbbc1b;
}

.ti-netflix span {
    display: inline-block;
    font: bold 31px "Liberation Sans", sans-serif;
    transform: scaleX(.62);
    color: #cf0a14;
}

.ti-active {
    width: 50px;
    margin: 0 2.500px;
    background: #e8b0ad;
    border-radius: 4px;
}

.teams-check {
    position: absolute;
    top: 4px;
    right: 4px;
    width: 20px;
    height: 20px;
    border-radius: 50%;
    background: #119a2b;
    display: flex;
    align-items: center;
    justify-content: center;
}

.word-w,
.teams-t {
    font: bold 12px "Liberation Sans", sans-serif;
    fill: #fff;
}

.teams-ms {
    font: bold 7px "Liberation Sans", sans-serif;
    fill: #7a5a3a;
}

.tray {
    display: flex;
    align-items: center;
    font: 14.700px "Open Sans", sans-serif;
    color: #222;
    margin-left: 85px;
}

.tray-cloud {
    margin-left: 23px;
}

.tray-lang {
    margin-left: 22px;
}

.tray-wifi {
    margin-left: 20px;
}

.tray-vol {
    margin-left: 12px;
}

.tray-bat {
    margin-left: 8px;
}

.clock {
    width: 92px;
    margin-left: -3px;
    text-align: right;
    line-height: 21px;
}

.tray-bell {
    margin-left: 9px;
}
```
